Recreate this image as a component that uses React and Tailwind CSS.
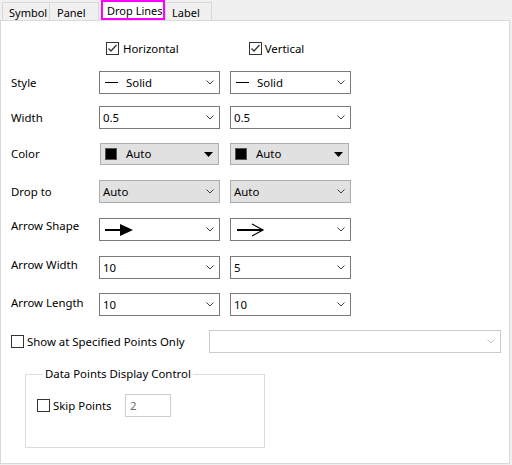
import React from 'react';

const Chevron = ({ color = '#404040' }) => (
  <svg width="8" height="5" viewBox="0 0 8 5" className="shrink-0">
    <path d="M0.5 0.5 L4 4 L7.5 0.5" fill="none" stroke={color} strokeWidth="1" />
  </svg>
);

const Check = ({ checked }) => (
  <span className="w-[13px] h-[13px] border border-[#333333] bg-white flex items-center justify-center shrink-0">
    {checked && (
      <svg width="11" height="11" viewBox="0 0 11 11">
        <path d="M1.5 5.5 L4 8 L9.5 2" fill="none" stroke="#333333" strokeWidth="1.3" />
      </svg>
    )}
  </span>
);

const Combo = ({ children, gray }) => (
  <div
    className={
      'w-[121px] h-[23px] border flex items-center justify-between pl-[3px] pr-[5px] ' +
      (gray ? 'bg-[#e1e1e1] border-[#adadad]' : 'bg-white border-[#7a7a7a]')
    }
  >
    <div className="flex items-center">{children}</div>
    <Chevron />
  </div>
);

const ColorCombo = () => (
  <div className="ml-[1px] w-[119px] h-[22px] bg-[#e1e1e1] border border-[#adadad] flex items-center justify-between pl-[4px] pr-[5px]">
    <div className="flex items-center">
      <span className="w-[12px] h-[12px] bg-black border border-[#555]" />
      <span className="ml-[9px]">Auto</span>
    </div>
    <svg width="9" height="5" viewBox="0 0 9 5">
      <path d="M0 0 L9 0 L4.5 5 Z" fill="#000" />
    </svg>
  </div>
);

const SolidLine = () => (
  <>
    <span className="ml-[2px] w-[13px] h-[1px] bg-black" />
    <span className="ml-[8px]">Solid</span>
  </>
);

const Row = ({ label, className, lift = '', children }) => (
  <div className={'flex items-center ' + className}>
    <span className={'w-[88px] ' + lift}>{label}</span>
    <div className="flex items-center gap-[10px]">{children}</div>
  </div>
);

export default function App() {
  return (
    <div
      className="w-[512px] h-[465px] bg-[#f0f0f0] text-[11.4px] text-black leading-none whitespace-nowrap"
      style={{ fontFamily: '"Segoe UI", "Noto Sans", "Open Sans", sans-serif' }}
    >
      {/* tab strip */}
      <div className="h-[20px] flex items-end pl-[2px] text-[11px]">
        <div className="w-[48px] h-[18px] bg-[#f0f0f0] border border-b-0 border-[#d9d9d9] flex items-center pl-[6px] pt-[1px]">
          Symbol
        </div>
        <div className="w-[49px] h-[18px] bg-[#f0f0f0] border border-b-0 border-l-0 border-[#d9d9d9] flex items-center pl-[7px] pt-[1px]">
          Panel
        </div>
        <div className="ml-[2px] w-[64px] h-[20px] bg-white border-2 border-[#ff00ff] flex items-center pl-[4px]">
          Drop Lines
        </div>
        <div className="w-[47px] h-[18px] bg-[#f0f0f0] border border-b-0 border-[#d9d9d9] flex items-center pl-[6px] pt-[1px]">
          Label
        </div>
      </div>

      {/* panel */}
      <div className="w-[510px] h-[444px] bg-white border border-[#d9d9d9] pl-[10px]">
        <div className="mt-[21px] flex items-center h-[13px]">
          <div className="ml-[95px] flex items-center">
            <Check checked />
            <span className="ml-[4px]">Horizontal</span>
          </div>
          <div className="ml-[70px] flex items-center">
            <Check checked />
            <span className="ml-[3px]">Vertical</span>
          </div>
        </div>

        <Row label="Style" className="mt-[16px]">
          <Combo><SolidLine /></Combo>
          <Combo><SolidLine /></Combo>
        </Row>
        <Row label="Width" className="mt-[12px]">
          <Combo>0.5</Combo>
          <Combo>0.5</Combo>
        </Row>
        <Row label="Color" className="mt-[14px]">
          <ColorCombo />
          <ColorCombo />
        </Row>
        <Row label="Drop to" className="mt-[15px]">
          <Combo gray>Auto</Combo>
          <Combo gray>Auto</Combo>
        </Row>
        <Row label="Arrow Shape" className="mt-[15px]" lift="pb-[7px]">
          <Combo>
            <svg width="30" height="14" viewBox="0 0 30 14" className="ml-[2px]">
              <rect x="0" y="6" width="16" height="2" fill="#000" />
              <path d="M15 1 L28 7 L15 13 Z" fill="#000" />
            </svg>
          </Combo>
          <Combo>
            <svg width="30" height="14" viewBox="0 0 30 14" className="ml-[3px]">
              <rect x="0" y="6" width="26" height="2" fill="#000" />
              <path d="M15 1 L26 7 L15 13" fill="none" stroke="#000" strokeWidth="1.2" />
            </svg>
          </Combo>
        </Row>
        <Row label="Arrow Width" className="mt-[15px]" lift="pb-[6px]">
          <Combo>10</Combo>
          <Combo>5</Combo>
        </Row>
        <Row label="Arrow Length" className="mt-[14px]" lift="pb-[3px]">
          <Combo>10</Combo>
          <Combo>10</Combo>
        </Row>

        <div className="mt-[14px] flex items-center h-[23px]">
          <Check />
          <span className="ml-[3px] w-[182px]">Show at Specified Points Only</span>
          <div className="w-[292px] h-[23px] border border-[#cccccc] bg-white flex items-center justify-end pr-[5px]">
            <Chevron color="#bfbfbf" />
          </div>
        </div>

        <fieldset className="ml-[14px] mt-[13px] w-[240px] h-[82px] border border-[#dcdcdc] pl-[11px]">
          <legend className="ml-[6px] px-[2px] h-[16px] flex items-center">Data Points Display Control</legend>
          <div className="mt-[12px] flex items-center">
            <Check />
            <span className="ml-[3px] w-[72px]">Skip Points</span>
            <div className="w-[46px] h-[23px] border border-[#cccccc] flex items-center pl-[4px] text-[#6d6d6d]">2</div>
          </div>
        </fieldset>
      </div>
    </div>
  );
}
